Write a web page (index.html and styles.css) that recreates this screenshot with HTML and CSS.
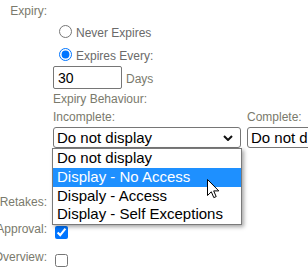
FILE: index.html
```html
<!DOCTYPE html>
<html>
<head>
<meta charset="utf-8">
<link rel="stylesheet" href="styles.css">
</head>
<body>
<div class="form">
  <div class="row expiry">
    <div class="lbl">Expiry:</div>
    <div class="ctl">
      <label class="opt"><input type="radio" name="exp"><span class="optText">Never Expires</span></label>
      <label class="opt"><input type="radio" name="exp" checked><span class="optText">Expires Every:</span></label>
      <div class="days"><input class="num" type="text" value="30"><span class="unit">Days</span></div>
      <div class="sub first">Expiry Behaviour:</div>
      <div class="pair">
        <div class="col">
          <div class="sub">Incomplete:</div>
          <div class="select">
            <span class="selText">Do not display</span>
            <svg class="chev" width="10" height="6" viewBox="0 0 10 6"><path d="M1 1 L5 5 L9 1" fill="none" stroke="#111" stroke-width="2"/></svg>
          </div>
          <ul class="menu">
            <li>Do not display</li>
            <li class="hl">Display - No Access</li>
            <li>Dispaly - Access</li>
            <li>Display - Self Exceptions</li>
          </ul>
          <svg class="cursor" width="13" height="20" viewBox="0 0 13 20"><path d="M0.5 0.5 L0.5 16.5 L4.3 12.8 L6.8 18.6 L9.2 17.6 L6.7 11.9 L11.8 11.9 Z" fill="#fff" stroke="#000" stroke-width="1" stroke-linejoin="miter"/></svg>
        </div>
        <div class="col">
          <div class="sub">Complete:</div>
          <div class="select"><span class="selText">Do not display</span></div>
        </div>
      </div>
    </div>
  </div>
  <div class="row retakes">
    <div class="lbl">Retakes:</div>
    <div class="ctl"></div>
  </div>
  <div class="row check">
    <div class="lbl">Approval:</div>
    <div class="ctl"><input type="checkbox" checked></div>
  </div>
  <div class="row check">
    <div class="lbl">Overview:</div>
    <div class="ctl"><input type="checkbox"></div>
  </div>
</div>
</body>
</html>
```
FILE: styles.css
```css
html, body {
  margin: 0;
  padding: 0;
  background: #fff;
  overflow: hidden;
}
body {
  font-family: "Liberation Sans", Arial, sans-serif;
  font-size: 12px;
  line-height: 14px;
  color: #7a7a6c;
  width: 308px;
  height: 270px;
}
.form {
  padding-top: 4px;
}
.row {
  display: flex;
  align-items: flex-start;
}
.lbl {
  width: 47px;
  flex: none;
  display: flex;
  justify-content: flex-end;
  white-space: nowrap;
}
.ctl {
  margin-left: 6px;
  flex: none;
}
.expiry .ctl {
  padding-top: 16px;
}
.opt {
  display: flex;
  align-items: center;
  height: 23px;
  color: #6a6a6a;
}
.opt input {
  margin: 0 4px 0 6px;
  width: 13px;
  height: 13px;
}
.optText {
  padding-top: 3px;
  white-space: nowrap;
}
.days {
  display: flex;
  align-items: center;
  height: 23px;
}
.num {
  box-sizing: border-box;
  width: 69px;
  height: 23px;
  margin: 0;
  border: 1px solid #767676;
  border-radius: 2px;
  padding: 0 0 0 4px;
  font-family: "Liberation Sans", Arial, sans-serif;
  font-size: 14px;
  color: #000;
  background: #fff;
  outline: none;
}
.unit {
  margin-left: 4px;
  padding-top: 3px;
}
.sub {
  line-height: 18px;
  white-space: nowrap;
}
.sub.first {
  margin-top: 1px;
}
.pair {
  display: flex;
  gap: 6px;
}
.col {
  position: relative;
  flex: none;
}
.select {
  box-sizing: border-box;
  margin-top: 1px;
  width: 188px;
  height: 21px;
  border: 1px solid #767676;
  border-radius: 3px;
  background: #fff;
  display: flex;
  align-items: center;
  padding-left: 3px;
  font-size: 15px;
  line-height: 17px;
  color: #000;
  white-space: nowrap;
  overflow: hidden;
}
.selText {
  flex: 1;
}
.chev {
  flex: none;
  margin-right: 7px;
}
.menu {
  position: absolute;
  left: -1px;
  top: 40px;
  width: 190px;
  box-sizing: border-box;
  margin: 0;
  padding: 0;
  list-style: none;
  background: #fff;
  border: 1px solid #7a7a7a;
  box-shadow: 2px 2px 4px rgba(0, 0, 0, 0.35);
  z-index: 5;
  font-size: 15px;
  color: #000;
}
.menu li {
  height: 18.75px;
  line-height: 18.75px;
  padding-left: 4px;
  white-space: nowrap;
}
.menu li.hl {
  background: #1e90ff;
  color: #fff;
}
.cursor {
  position: absolute;
  left: 154px;
  top: 71px;
  z-index: 6;
}
.retakes {
  margin-top: 47px;
  height: 27px;
}
.check {
  height: 28px;
}
.check input {
  margin: 4px 0 0 2px;
  width: 13px;
  height: 13px;
}
```
